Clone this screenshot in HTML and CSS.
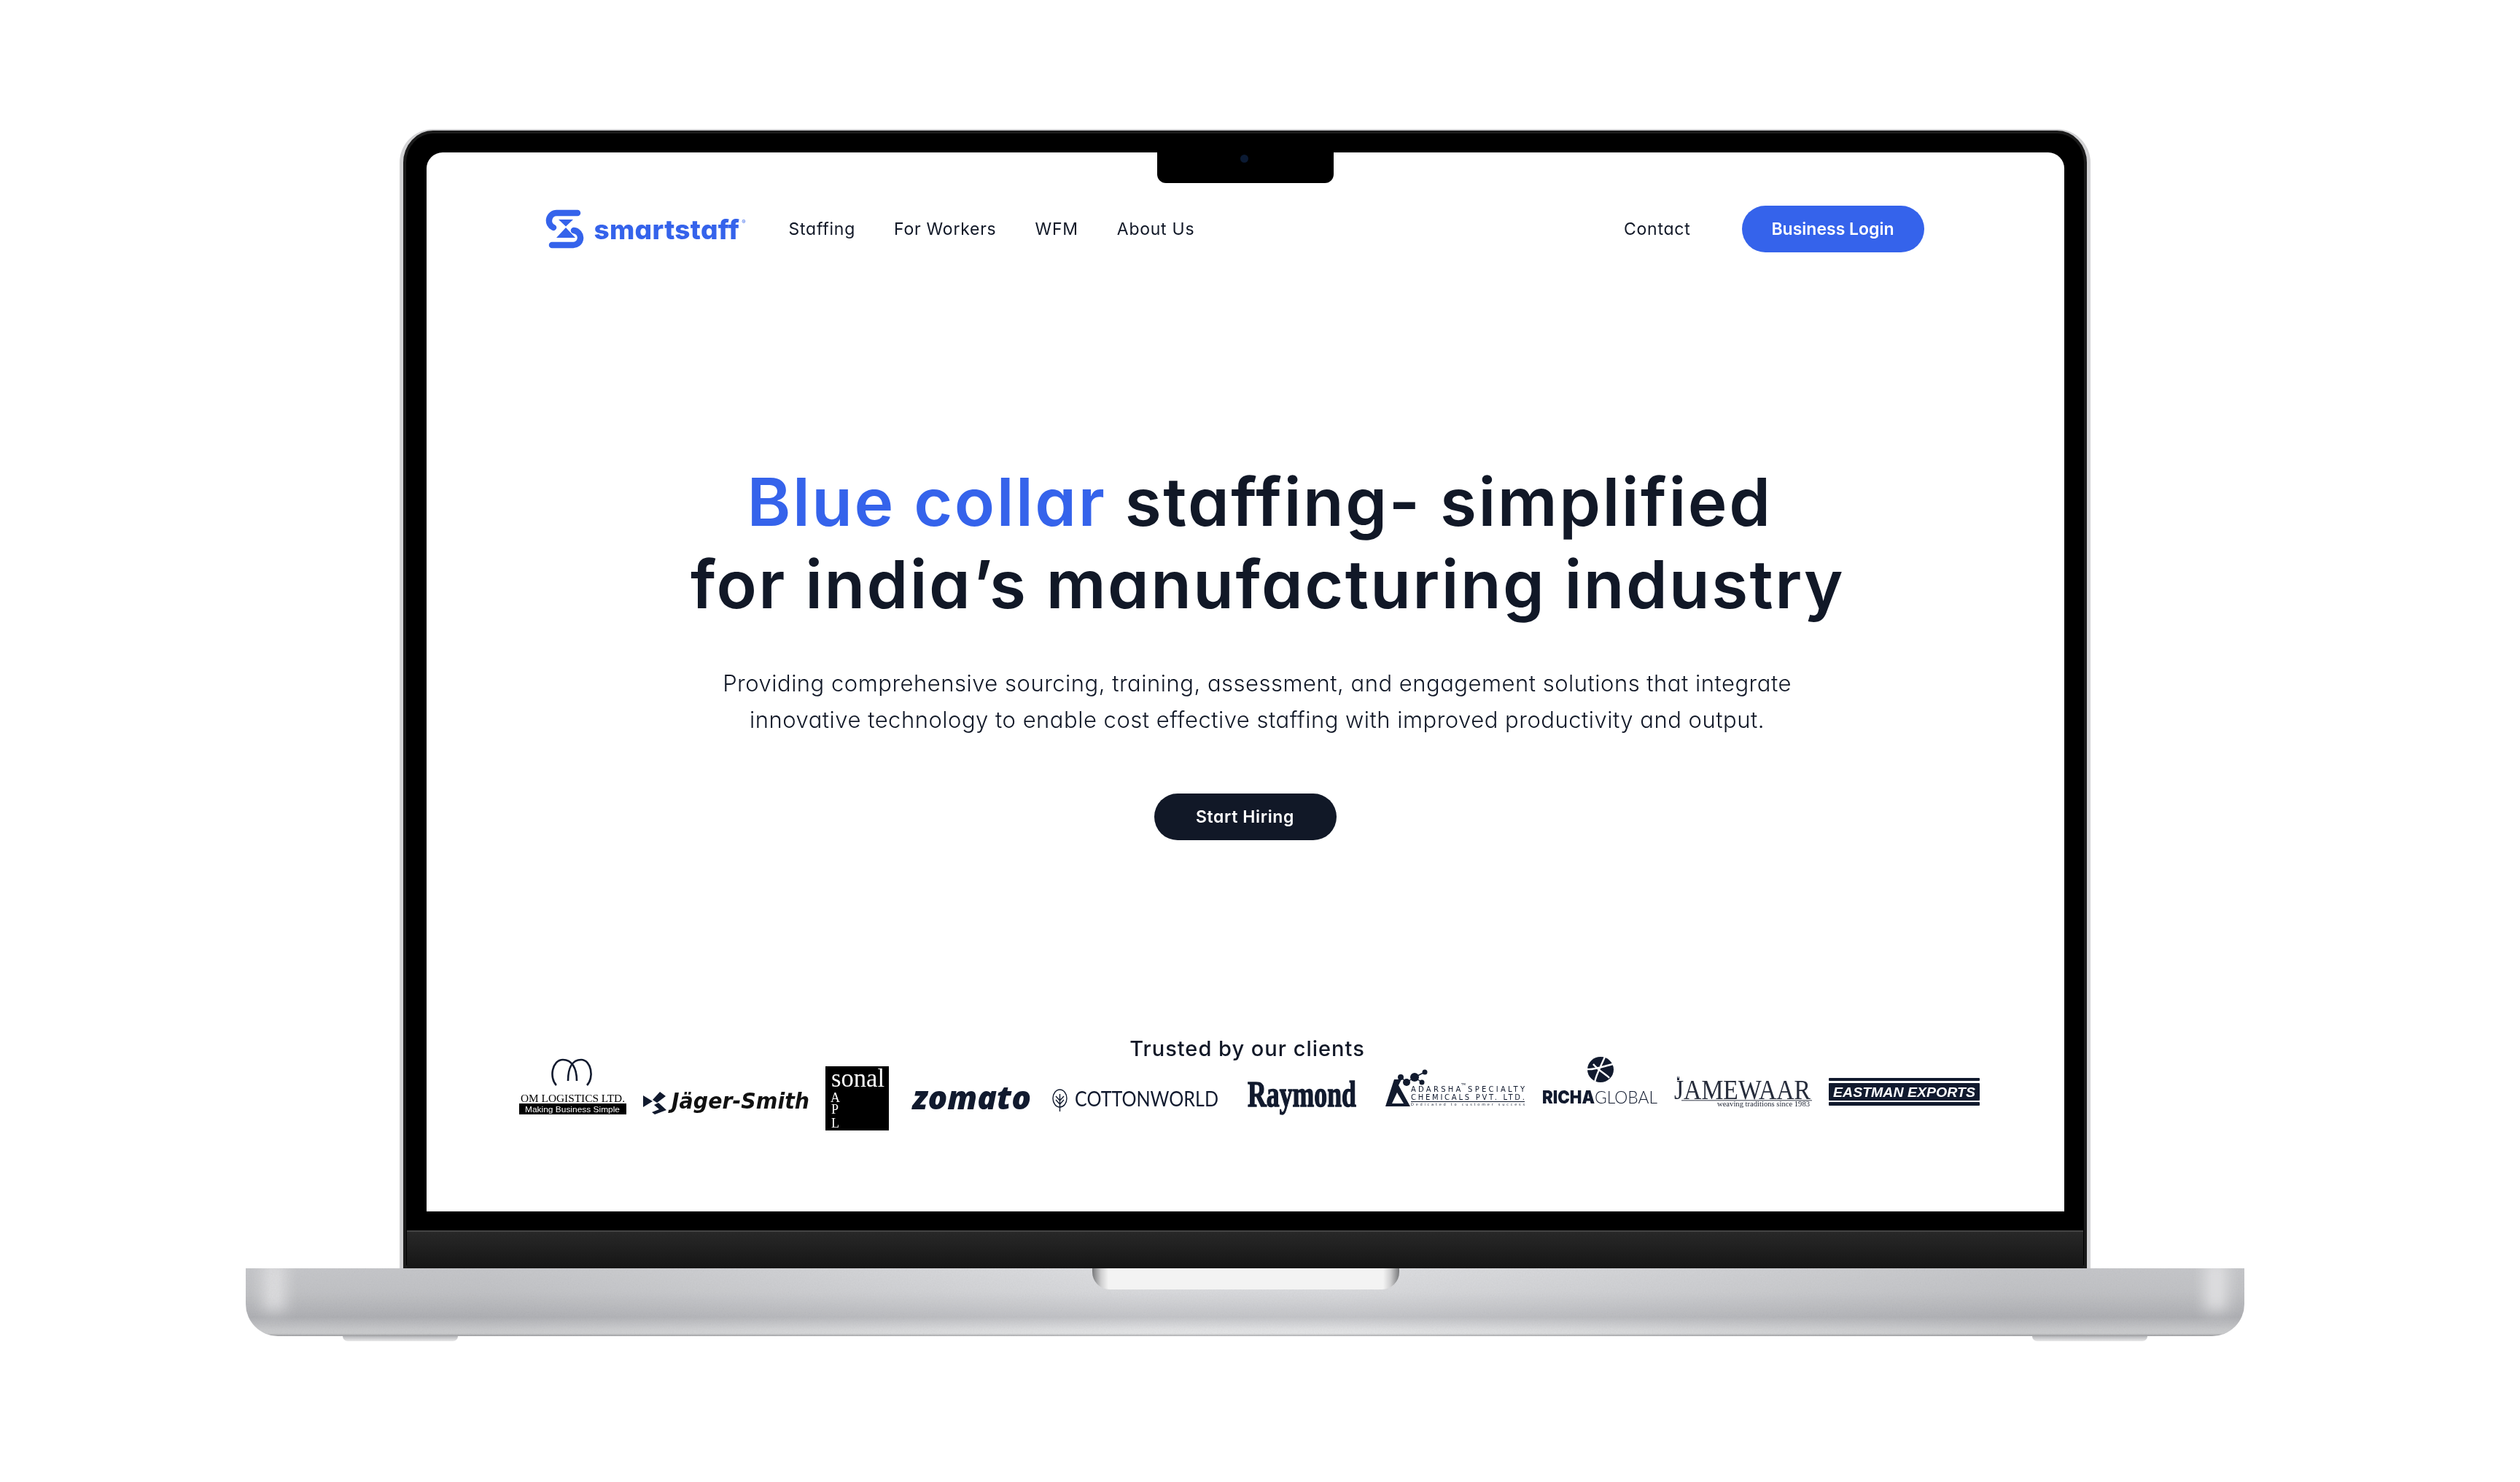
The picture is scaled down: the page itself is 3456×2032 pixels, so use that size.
FILE: index.html
```html
<!DOCTYPE html>
<html lang="en">
<head>
<meta charset="utf-8">
<title>smartstaff</title>
<link rel="stylesheet" href="styles.css">
</head>
<body>
<svg class="defs" width="0" height="0"><filter id="grain"><feTurbulence type="fractalNoise" baseFrequency="0.55" numOctaves="2"/><feColorMatrix type="saturate" values="0"/></filter></svg>
<main class="stage">
  <section class="lid">
    <div class="screen">
      <div class="notch"><span class="camera"></span></div>
      <header class="nav">
        <div class="nav-left">
          <a class="brand">
            <svg class="brand-icon" viewBox="0 0 70 66" width="70" height="66">
              <path class="s-stroke" d="M52 11H23.5A10.5 10.5 0 0 0 19 31"/>
              <path class="s-stroke" d="M47 35A10 10 0 0 1 45 55H17"/>
              <path class="s-fill" d="M26 20H46L36 29.5ZM36 31L49 45H23Z"/>
            </svg>
            <span class="wordmark">smartstaff</span><sup class="reg">®</sup>
          </a>
          <nav class="links">
            <a class="link">Staffing</a>
            <a class="link">For Workers</a>
            <a class="link">WFM</a>
            <a class="link">About Us</a>
          </nav>
        </div>
        <div class="nav-right">
          <a class="link">Contact</a>
          <a class="pill pill-blue">Business Login</a>
        </div>
      </header>
      <div class="hero">
        <h1 class="headline"><span class="line-one"><span class="accent">Blue collar</span> staffing- simplified</span>for india’s manufacturing industry</h1>
        <p class="lead">Providing comprehensive sourcing, training, assessment, and engagement solutions that integrate<br>innovative technology to enable cost effective staffing with improved productivity and output.</p>
        <a class="pill pill-dark">Start Hiring</a>
      </div>
      <h2 class="trusted">Trusted by our clients</h2>
      <div class="logos">
        <svg class="logo l-om" width="147" height="76" viewBox="0 0 147 76">
          <path class="ln" d="M51 36C41 26 45 1 60 1C72 1 79 12 79 30"/>
          <path class="ln" d="M93 36C103 26 99 1 85 1C73 1 67 12 67 30"/>
          <text class="t-serif" x="2" y="59" font-size="15" textLength="143" lengthAdjust="spacingAndGlyphs">OM LOGISTICS LTD.</text>
          <rect y="61" width="147" height="15"/>
          <text class="t-sans t-white" x="8" y="72.5" font-size="11.5" textLength="130" lengthAdjust="spacingAndGlyphs">Making Business Simple</text>
        </svg>
        <svg class="logo l-jager" width="228" height="40" viewBox="0 0 228 40">
          <path d="M0 7L13 15L0 23ZM13 13L23 2L31 8L19 17ZM15 20L21 17L32 27L16 33L12 30L22 26Z"/>
          <text class="t-tech" x="39" y="25" font-size="31" textLength="189" lengthAdjust="spacingAndGlyphs">Jäger-Smith</text>
        </svg>
        <svg class="logo l-sonal" width="87" height="88" viewBox="0 0 87 88">
          <rect width="87" height="88"/>
          <text class="t-serif t-white" x="8" y="28" font-size="36" textLength="73" lengthAdjust="spacingAndGlyphs">sonal</text>
          <text class="t-serif t-white" x="7" y="49" font-size="18">A</text>
          <text class="t-serif t-white" x="8" y="65" font-size="18">P</text>
          <text class="t-serif t-white" x="8" y="84" font-size="18">L</text>
        </svg>
        <svg class="logo l-zomato" width="163" height="42" viewBox="0 0 163 42">
          <text class="t-zomato" x="0" y="36" font-size="45" textLength="163" lengthAdjust="spacingAndGlyphs">zomato</text>
        </svg>
        <svg class="logo l-cotton" width="228" height="32" viewBox="0 0 228 32">
          <ellipse class="ln-thin" cx="10.5" cy="13" rx="9.5" ry="12"/>
          <path class="ln-thin" d="M10.5 7V31M5 10L10.5 16L16 10M5 15L10.5 21L16 15"/>
          <text class="t-cotton" x="31" y="24" font-size="28" textLength="197" lengthAdjust="spacingAndGlyphs">COTTONWORLD</text>
        </svg>
        <svg class="logo l-raymond" width="149" height="54" viewBox="0 0 149 54">
          <text class="t-raymond" x="0" y="39" font-size="50" textLength="149" lengthAdjust="spacingAndGlyphs">Raymond</text>
        </svg>
        <svg class="logo l-adarsha" width="192" height="53" viewBox="0 0 192 53">
          <path class="ln-thin" d="M22 12L30 19L41 12L51 19M41 12L55 5"/>
          <circle cx="22" cy="12" r="4"/><circle cx="30" cy="19" r="5"/><circle cx="41" cy="12" r="6"/><circle cx="51" cy="19" r="3.5"/><circle cx="55" cy="5" r="3.5"/>
          <path fill-rule="evenodd" d="M13 15H23L19 23L35 52H1ZM17 33L10 48H26Z"/>
          <text class="t-wide" x="36" y="32" font-size="10" textLength="156" lengthAdjust="spacing">ADARSHA SPECIALTY</text>
          <text class="t-wide" x="105" y="23" font-size="4">TM</text>
          <text class="t-wide" x="36" y="43" font-size="10" textLength="156" lengthAdjust="spacing">CHEMICALS PVT. LTD.</text>
          <rect x="36" y="45" width="156" height="1"/>
          <text class="t-wide" x="36" y="51" font-size="5" textLength="156" lengthAdjust="spacing">Dedicated to customer success</text>
        </svg>
        <svg class="logo l-richa" width="158" height="66" viewBox="0 0 158 66">
          <ellipse cx="80" cy="17.5" rx="18" ry="17.5"/>
          <path class="ln-cut" d="M86 0C80 14 74 24 72 35M97 10C84 13 72 18 62 17M92 29C88 24 78 20 70 10"/>
          <text class="t-black" x="0" y="64" font-size="24" textLength="72" lengthAdjust="spacingAndGlyphs">RICHA</text>
          <text class="t-light" x="72" y="64" font-size="24" textLength="86" lengthAdjust="spacingAndGlyphs">GLOBAL</text>
        </svg>
        <svg class="logo l-jame" width="189" height="44" viewBox="0 0 189 44">
          <path d="M4 0L5.5 4L7 0L7 6H4Z"/>
          <text class="t-serif t-navy"><tspan x="0" y="32" font-size="38" textLength="187" lengthAdjust="spacingAndGlyphs">JAMEWAAR</tspan> <tspan x="59" y="41.5" font-size="11" textLength="127" lengthAdjust="spacingAndGlyphs">weaving traditions since 1983</tspan></text>
          <rect class="r-grey" x="10" y="33" width="179" height="1.5"/>
        </svg>
        <svg class="logo l-east" width="207" height="38" viewBox="0 0 207 38">
          <rect width="207" height="4" rx="1"/><rect y="7" width="207" height="24" rx="1"/><rect y="33" width="207" height="5" rx="1"/>
          <text class="t-east" x="6" y="26" font-size="19" textLength="195" lengthAdjust="spacingAndGlyphs">EASTMAN EXPORTS</text>
        </svg>
      </div>
    </div>
    <div class="hinge"></div>
  </section>
  <section class="base">
    <svg class="grain" width="2741" height="93"><rect width="2741" height="93" filter="url(#grain)"/></svg>
    <div class="thumb"></div>
  </section>
  <div class="feet"><span class="foot"></span><span class="foot"></span></div>
</main>
</body>
</html>
```

FILE: styles.css
```css
* { box-sizing: border-box; }
html, body { margin: 0; padding: 0; background: #fff; }
body { width: 3456px; height: 2032px; overflow: hidden; font-family: Inter, "Liberation Sans", sans-serif; color: #111827; font-feature-settings: "cv11" 1; }
.defs { position: absolute; }
.stage { display: flex; flex-direction: column; align-items: center; padding: 177px 41px 0 0; }

.lid { width: 2319px; height: 1562px; background: #000; border: solid #d2d2d4; border-width: 2px 5px 0; border-radius: 46px 46px 0 0; box-shadow: inset 0 0 0 4px #1b1b1b; display: flex; flex-direction: column; align-items: center; padding-top: 30px; }
.screen { position: relative; width: 2246px; height: 1452px; padding-top: 73px; background: #fff; border-radius: 22px 22px 0 0; flex: none; }
.notch { position: absolute; left: 50%; top: 0; width: 242px; height: 42px; margin-left: -121px; background: #000; border-radius: 0 0 12px 12px; }
.camera { position: absolute; left: 114px; top: 3px; width: 11px; height: 11px; border-radius: 50%; background: #0b1a33; }
.hinge { width: 2299px; height: 52px; margin-top: 26px; flex: none; border-top: 2px solid #444; background: linear-gradient(#282828, #151515); }

.base { position: relative; width: 2741px; height: 93px; border-radius: 0 0 44px 44px; overflow: hidden;
  background:
    linear-gradient(90deg, rgba(110,111,115,.2) 0, rgba(110,111,115,.2) 12%, rgba(255,255,255,.08) 45%, rgba(255,255,255,.08) 55%, rgba(110,111,115,.2) 88%, rgba(110,111,115,.2) 100%),
    linear-gradient(#dcdde0 0, #d6d7da 35%, #bfc0c4 72%, #dedfe1 90%, #e2e3e4 96%, #a8a9ac 100%); }
.base::before, .base::after { content: ""; position: absolute; top: -10px; width: 30px; height: 68px; background: #dfdfe1; filter: blur(10px); }
.base::before { left: 24px; }
.base::after { right: 24px; }
.grain { position: absolute; left: 0; top: 0; opacity: .1; mix-blend-mode: multiply; }
.thumb { position: absolute; left: 50%; top: 0; width: 421px; height: 29px; margin-left: -210px; border-radius: 0 0 24px 24px; background: linear-gradient(90deg, #77787a 0, #cfcfd0 12px, #f3f3f3 22px, #f3f3f3 calc(100% - 22px), #cfcfd0 calc(100% - 12px), #77787a 100%); }
.feet { width: 2741px; height: 7px; padding: 0 133px; display: flex; justify-content: space-between; }
.foot { width: 158px; height: 7px; border-radius: 0 0 8px 8px; background: linear-gradient(#b4b5b8, #e9e9ea); }

.nav { display: flex; justify-content: space-between; align-items: center; height: 64px; padding: 0 192px 0 155px; }
.nav-left { display: flex; align-items: center; }
.brand { display: flex; align-items: center; width: 342px; }
.brand-icon { flex: none; display: block; }
.s-stroke { fill: none; stroke: #3563eb; stroke-width: 8.5; stroke-linecap: round; }
.s-fill { fill: #3563eb; }
.wordmark { font-size: 37px; font-weight: 800; color: #3563eb; letter-spacing: .3px; margin-left: 5px; line-height: 1; }
.reg { font-size: 8px; color: #3563eb; margin-left: 3px; align-self: flex-start; margin-top: 18px; }
.links { display: flex; gap: 53px; }
.nav-right { display: flex; align-items: center; gap: 70px; }
.link { font-size: 23px; font-weight: 400; color: #111827; letter-spacing: .75px; white-space: nowrap; }

.pill { display: flex; align-items: center; justify-content: center; width: 250px; height: 64px; border-radius: 32px; color: #fff; font-size: 23px; font-weight: 600; white-space: nowrap; }
.pill-blue { background: #3563eb; }
.pill-dark { background: #111827; margin-top: 77px; letter-spacing: .6px; }

.hero { display: flex; flex-direction: column; align-items: center; }
.headline { margin: 286px 0 0; padding-left: 62px; font-size: 91px; line-height: 113px; font-weight: 600; letter-spacing: 2.4px; text-align: center; white-space: nowrap; }
.line-one { display: block; padding-right: 22px; letter-spacing: 2.5px; }
.accent { color: #3563eb; }
.lead { margin: 54px 0 0; padding-left: 33px; font-size: 31px; line-height: 49.6px; font-weight: 350; letter-spacing: .5px; text-align: center; white-space: nowrap; }

.trusted { margin: 274px 0 0; font-size: 29px; line-height: 24px; font-weight: 500; letter-spacing: 1px; text-align: center; padding-left: 6px; }
.logos { display: flex; align-items: flex-start; padding-left: 127px; margin-top: -1px; }
.logo { display: block; flex: none; fill: #111a2e; overflow: visible; }
.l-om, .l-sonal { fill: #000; }
.ln { fill: none; stroke: #111a2e; stroke-width: 2.6; }
.ln-thin { fill: none; stroke: #111a2e; stroke-width: 1.4; }
.ln-cut { fill: none; stroke: #fff; stroke-width: 2.4; }
.r-grey { fill: #777b84; }
.t-serif { font-family: "Liberation Serif", serif; fill: #000; }
.t-sans { font-family: "Liberation Sans", sans-serif; }
.t-white { fill: #fff; }
.t-navy { fill: #262c3b; }
.t-tech { font-family: "DejaVu Sans", sans-serif; font-weight: 700; font-style: oblique; fill: #111; }
.t-zomato { font-family: "Open Sans", sans-serif; font-weight: 800; font-style: italic; }
.t-cotton { font-family: Lato, sans-serif; font-weight: 400; }
.t-raymond { font-family: "Liberation Serif", serif; font-weight: 700; stroke: #111a2e; stroke-width: 1.4; }
.t-wide { font-family: "DejaVu Sans", sans-serif; }
.t-black { font-family: Inter, sans-serif; font-weight: 900; }
.t-light { font-family: Lato, sans-serif; font-weight: 300; }
.t-east { font-family: "Liberation Sans", sans-serif; font-weight: 700; font-style: italic; fill: #fff; }

.l-om { margin-top: 3px; }
.l-jager { margin: 46px 0 0 23px; }
.l-sonal { margin: 13px 0 0 22px; }
.l-zomato { margin: 36px 0 0 32px; }
.l-cotton { margin: 44px 0 0 29px; }
.l-raymond { margin: 29px 0 0 40px; }
.l-adarsha { margin: 16px 0 0 39px; }
.l-richa { margin: 0 0 0 24px; }
.l-jame { margin: 26px 0 0 23px; }
.l-east { margin: 29px 0 0 23px; }
```
